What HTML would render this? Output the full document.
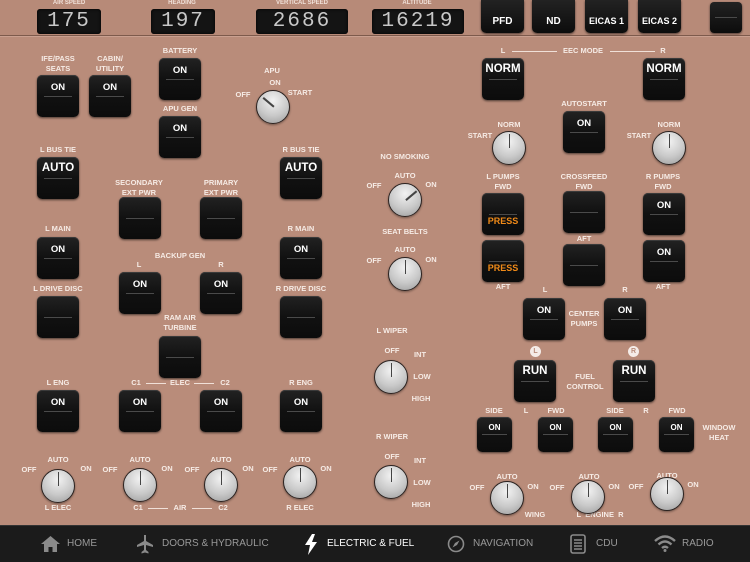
<!DOCTYPE html>
<html><head><meta charset="utf-8"><style>
*{margin:0;padding:0;box-sizing:border-box}
body{width:750px;height:562px;overflow:hidden;position:relative;background:#b98c7a;font-family:"Liberation Sans",sans-serif;color:#f4e8e2}
.top{position:absolute;left:0;top:0;width:750px;height:36px;background:#b78a78;border-bottom:1px solid #7d5a4c;box-shadow:0 1px 0 #c9a090}
.l{position:absolute;transform:translateX(-50%);white-space:nowrap;text-align:center;font-size:7.5px;line-height:10px;font-weight:bold;color:#f6ebe5}
.b{position:absolute;width:42px;height:42px;border-radius:5px;background:linear-gradient(#222 0%,#111 50%,#0c0c0c 100%);box-shadow:0 1px 2px rgba(0,0,0,.6),inset 0 1px 0 #3a3a3a;color:#fff;font-weight:bold;font-size:9.5px;text-align:center;padding-top:7px}
.b::after{content:"";position:absolute;left:7px;right:7px;top:21px;height:1px;background:#4a4a4a}
.b.s{width:35px;height:35px;font-size:8px;padding-top:6px}
.b.s::after{top:17px;left:5px;right:5px}
.big{font-size:11.5px;padding-top:5px}
.pr{color:#f08a18;padding-top:23px;font-size:9px}
.k{position:absolute;width:34px;height:34px;border-radius:50%;background:radial-gradient(circle at 50% 30%,#f2f2f2 0%,#c9c9c9 55%,#9a9a9a 100%);border:1.5px solid #2a2220;box-shadow:0 1px 2px rgba(0,0,0,.4)}
.k i{position:absolute;left:15.5px;top:2px;width:1.5px;height:14px;background:#444;transform-origin:50% 100%}
.d{position:absolute;top:9px;height:25px;background:#141414;border-radius:3px;box-shadow:inset 0 0 3px #000;color:#c8c8c8;font-family:"Liberation Mono",monospace;font-size:21px;line-height:25px;text-align:center;letter-spacing:2px}
.dl{position:absolute;top:0;transform:translateX(-50%);font-size:6px;font-weight:bold;color:#f0e0d8}
.tb{position:absolute;top:0;height:33px;width:43px;border-radius:0 0 5px 5px;background:linear-gradient(#222,#0c0c0c);color:#fff;font-weight:bold;font-size:10px;text-align:center;padding-top:16px;box-shadow:0 1px 2px rgba(0,0,0,.6)}
.ln{position:absolute;height:1px;background:#f0e0d8}
.nav{position:absolute;left:0;top:525px;width:750px;height:37px;background:#1b1b1b;border-top:1px solid #333}
.n{position:absolute;top:12px;font-size:10px;color:#999;white-space:nowrap}
.ci{position:absolute;width:11px;height:11px;border-radius:50%;background:#f5ece8;color:#b98c7a;font-size:7px;font-weight:bold;text-align:center;line-height:11px}
</style></head><body>
<div class="top"></div>
<div class="dl" style="left:69px">AIR SPEED</div><div class="d" style="left:37px;width:64px">175</div>
<div class="dl" style="left:182px">HEADING</div><div class="d" style="left:151px;width:64px">197</div>
<div class="dl" style="left:302px">VERTICAL SPEED</div><div class="d" style="left:256px;width:92px">2686</div>
<div class="dl" style="left:417px">ALTITUDE</div><div class="d" style="left:372px;width:92px">16219</div>
<div class="tb" style="left:481px">PFD</div>
<div class="tb" style="left:532px">ND</div>
<div class="tb" style="left:585px;font-size:9px">EICAS 1</div>
<div class="tb" style="left:638px;font-size:9px">EICAS 2</div>
<div class="tb" style="left:710px;width:32px;height:31px;top:2px;border-radius:4px"><div style="position:absolute;left:5px;right:5px;top:15px;height:1px;background:#4a4a4a"></div></div>

<div class="l" style="left:58px;top:54px">IFE/PASS<br>SEATS</div><div class="b" style="left:37px;top:75px">ON</div>
<div class="l" style="left:110px;top:54px">CABIN/<br>UTILITY</div><div class="b" style="left:89px;top:75px">ON</div>
<div class="l" style="left:180px;top:46px">BATTERY</div><div class="b" style="left:159px;top:58px">ON</div>
<div class="l" style="left:180px;top:104px">APU GEN</div><div class="b" style="left:159px;top:116px">ON</div>
<div class="l" style="left:272px;top:66px">APU</div><div class="l" style="left:275px;top:78px">ON</div><div class="l" style="left:243px;top:90px">OFF</div><div class="l" style="left:300px;top:88px">START</div>
<div class="k" style="left:256px;top:90px"><i style="transform:rotate(-50deg)"></i></div>
<div class="l" style="left:58px;top:145px">L BUS TIE</div><div class="b big" style="left:37px;top:157px">AUTO</div>
<div class="l" style="left:301px;top:145px">R BUS TIE</div><div class="b big" style="left:280px;top:157px">AUTO</div>
<div class="l" style="left:139px;top:178px">SECONDARY<br>EXT PWR</div><div class="b" style="left:119px;top:197px"></div>
<div class="l" style="left:221px;top:178px">PRIMARY<br>EXT PWR</div><div class="b" style="left:200px;top:197px"></div>
<div class="l" style="left:405px;top:152px">NO SMOKING</div><div class="l" style="left:405px;top:171px">AUTO</div><div class="l" style="left:374px;top:181px">OFF</div><div class="l" style="left:431px;top:180px">ON</div>
<div class="k" style="left:388px;top:183px"><i style="transform:rotate(50deg)"></i></div>
<div class="l" style="left:58px;top:224px">L MAIN</div><div class="b" style="left:37px;top:237px">ON</div>
<div class="l" style="left:301px;top:224px">R MAIN</div><div class="b" style="left:280px;top:237px">ON</div>
<div class="l" style="left:180px;top:251px">BACKUP GEN</div><div class="l" style="left:139px;top:260px">L</div><div class="l" style="left:221px;top:260px">R</div>
<div class="b" style="left:119px;top:272px">ON</div><div class="b" style="left:200px;top:272px">ON</div>
<div class="l" style="left:405px;top:227px">SEAT BELTS</div><div class="l" style="left:405px;top:245px">AUTO</div><div class="l" style="left:374px;top:256px">OFF</div><div class="l" style="left:431px;top:255px">ON</div>
<div class="k" style="left:388px;top:257px"><i></i></div>
<div class="l" style="left:58px;top:284px">L DRIVE DISC</div><div class="b" style="left:37px;top:296px"></div>
<div class="l" style="left:301px;top:284px">R DRIVE DISC</div><div class="b" style="left:280px;top:296px"></div>
<div class="l" style="left:180px;top:313px">RAM AIR<br>TURBINE</div><div class="b" style="left:159px;top:336px"></div>
<div class="l" style="left:392px;top:326px">L WIPER</div><div class="l" style="left:392px;top:346px">OFF</div><div class="l" style="left:420px;top:350px">INT</div><div class="l" style="left:422px;top:372px">LOW</div><div class="l" style="left:421px;top:394px">HIGH</div>
<div class="k" style="left:374px;top:360px"><i></i></div>
<div class="l" style="left:58px;top:378px">L ENG</div><div class="b" style="left:37px;top:390px">ON</div>
<div class="l" style="left:136px;top:378px">C1</div><div class="l" style="left:180px;top:378px">ELEC</div><div class="l" style="left:225px;top:378px">C2</div>
<div class="ln" style="left:146px;top:383px;width:20px"></div><div class="ln" style="left:194px;top:383px;width:20px"></div>
<div class="b" style="left:119px;top:390px">ON</div><div class="b" style="left:200px;top:390px">ON</div>
<div class="l" style="left:301px;top:378px">R ENG</div><div class="b" style="left:280px;top:390px">ON</div>
<div class="l" style="left:392px;top:432px">R WIPER</div><div class="l" style="left:392px;top:452px">OFF</div><div class="l" style="left:420px;top:456px">INT</div><div class="l" style="left:422px;top:478px">LOW</div><div class="l" style="left:421px;top:500px">HIGH</div>
<div class="k" style="left:374px;top:465px"><i></i></div>

<div class="l" style="left:58px;top:455px">AUTO</div><div class="l" style="left:29px;top:465px">OFF</div><div class="l" style="left:86px;top:464px">ON</div><div class="l" style="left:58px;top:503px">L ELEC</div>
<div class="k" style="left:41px;top:469px"><i></i></div>
<div class="l" style="left:140px;top:455px">AUTO</div><div class="l" style="left:110px;top:465px">OFF</div><div class="l" style="left:167px;top:464px">ON</div>
<div class="k" style="left:123px;top:468px"><i></i></div>
<div class="l" style="left:221px;top:455px">AUTO</div><div class="l" style="left:192px;top:465px">OFF</div><div class="l" style="left:248px;top:464px">ON</div>
<div class="k" style="left:204px;top:468px"><i></i></div>
<div class="l" style="left:138px;top:503px">C1</div><div class="l" style="left:180px;top:503px">AIR</div><div class="l" style="left:223px;top:503px">C2</div>
<div class="ln" style="left:148px;top:508px;width:20px"></div><div class="ln" style="left:192px;top:508px;width:20px"></div>
<div class="l" style="left:300px;top:455px">AUTO</div><div class="l" style="left:270px;top:465px">OFF</div><div class="l" style="left:326px;top:464px">ON</div><div class="l" style="left:300px;top:503px">R ELEC</div>
<div class="k" style="left:283px;top:465px"><i></i></div>

<div class="l" style="left:503px;top:46px">L</div><div class="l" style="left:583px;top:46px">EEC MODE</div><div class="l" style="left:663px;top:46px">R</div>
<div class="ln" style="left:512px;top:51px;width:45px"></div><div class="ln" style="left:610px;top:51px;width:45px"></div>
<div class="b big" style="left:482px;top:58px">NORM</div><div class="b big" style="left:643px;top:58px">NORM</div>
<div class="l" style="left:584px;top:99px">AUTOSTART</div><div class="b" style="left:563px;top:111px">ON</div>
<div class="l" style="left:509px;top:120px">NORM</div><div class="l" style="left:480px;top:131px">START</div>
<div class="k" style="left:492px;top:131px"><i></i></div>
<div class="l" style="left:669px;top:120px">NORM</div><div class="l" style="left:639px;top:131px">START</div>
<div class="k" style="left:652px;top:131px"><i></i></div>
<div class="l" style="left:503px;top:172px">L PUMPS<br>FWD</div>
<div class="b pr" style="left:482px;top:193px">PRESS</div><div class="b pr" style="left:482px;top:240px">PRESS</div>
<div class="l" style="left:503px;top:282px">AFT</div>
<div class="l" style="left:584px;top:172px">CROSSFEED<br>FWD</div><div class="b" style="left:563px;top:191px"></div>
<div class="l" style="left:584px;top:234px">AFT</div><div class="b" style="left:563px;top:244px"></div>
<div class="l" style="left:663px;top:172px">R PUMPS<br>FWD</div>
<div class="b" style="left:643px;top:193px">ON</div><div class="b" style="left:643px;top:240px">ON</div>
<div class="l" style="left:663px;top:282px">AFT</div>
<div class="l" style="left:545px;top:285px">L</div><div class="l" style="left:625px;top:285px">R</div>
<div class="b" style="left:523px;top:298px">ON</div><div class="b" style="left:604px;top:298px">ON</div>
<div class="l" style="left:584px;top:309px">CENTER<br>PUMPS</div>
<div class="ci" style="left:530px;top:346px">L</div><div class="ci" style="left:628px;top:346px">R</div>
<div class="b big" style="left:514px;top:360px">RUN</div><div class="b big" style="left:613px;top:360px">RUN</div>
<div class="l" style="left:585px;top:372px">FUEL<br>CONTROL</div>
<div class="l" style="left:494px;top:406px">SIDE</div><div class="l" style="left:526px;top:406px">L</div><div class="l" style="left:556px;top:406px">FWD</div>
<div class="l" style="left:615px;top:406px">SIDE</div><div class="l" style="left:646px;top:406px">R</div><div class="l" style="left:677px;top:406px">FWD</div>
<div class="b s" style="left:477px;top:417px">ON</div><div class="b s" style="left:538px;top:417px">ON</div>
<div class="b s" style="left:598px;top:417px">ON</div><div class="b s" style="left:659px;top:417px">ON</div>
<div class="l" style="left:719px;top:423px">WINDOW<br>HEAT</div>
<div class="l" style="left:507px;top:472px">AUTO</div><div class="l" style="left:477px;top:483px">OFF</div><div class="l" style="left:533px;top:482px">ON</div><div class="l" style="left:535px;top:510px">WING</div>
<div class="k" style="left:490px;top:481px"><i></i></div>
<div class="l" style="left:589px;top:472px">AUTO</div><div class="l" style="left:557px;top:483px">OFF</div><div class="l" style="left:614px;top:482px">ON</div><div class="l" style="left:600px;top:510px">L&nbsp;&nbsp;ENGINE&nbsp;&nbsp;R</div>
<div class="k" style="left:571px;top:480px"><i></i></div>
<div class="l" style="left:667px;top:471px">AUTO</div><div class="l" style="left:636px;top:482px">OFF</div><div class="l" style="left:693px;top:480px">ON</div>
<div class="k" style="left:650px;top:477px"><i></i></div>

<div class="nav">
<svg style="position:absolute;left:40px;top:9px" width="21" height="18" viewBox="0 0 21 18"><path d="M10.5 1 L20 9 H17 V17 H12.5 V12 H8.5 V17 H4 V9 H1 Z" fill="#8a8a8a"/></svg>
<div class="n" style="left:67px">HOME</div>
<svg style="position:absolute;left:136px;top:8px" width="18" height="20" viewBox="0 0 18 20"><path d="M8 1 h2 v6 l7 4 v2 l-7 -2 v5 l2.5 2 v1.5 L9 18.5 5.5 19.5 V18 L8 16 v-5 l-7 2 v-2 l7 -4 z" fill="#8a8a8a"/></svg>
<div class="n" style="left:162px">DOORS &amp; HYDRAULIC</div>
<svg style="position:absolute;left:304px;top:8px" width="14" height="21" viewBox="0 0 14 21"><path d="M8 0 L1 11 H6 L4 21 L13 8 H8 L11 0 Z" fill="#fff"/></svg>
<div class="n" style="left:327px;color:#fff">ELECTRIC &amp; FUEL</div>
<svg style="position:absolute;left:447px;top:9px" width="18" height="18" viewBox="0 0 18 18"><circle cx="9" cy="9" r="7.5" fill="none" stroke="#8a8a8a" stroke-width="1.6"/><path d="M12.5 5.5 L10 10 L5.5 12.5 L8 8 Z" fill="#8a8a8a"/></svg>
<div class="n" style="left:473px">NAVIGATION</div>
<svg style="position:absolute;left:570px;top:8px" width="16" height="20" viewBox="0 0 16 20"><rect x="1" y="1" width="14" height="18" rx="2" fill="none" stroke="#8a8a8a" stroke-width="1.6"/><path d="M4 6h8M4 9h8M4 12h8M4 15h8" stroke="#8a8a8a" stroke-width="1.4"/></svg>
<div class="n" style="left:596px">CDU</div>
<svg style="position:absolute;left:654px;top:9px" width="22" height="17" viewBox="0 0 22 17"><path d="M1 6 Q11 -3 21 6" fill="none" stroke="#8a8a8a" stroke-width="2.4"/><path d="M4.5 9.5 Q11 3.5 17.5 9.5" fill="none" stroke="#8a8a8a" stroke-width="2.4"/><path d="M8 13 Q11 10.5 14 13" fill="none" stroke="#8a8a8a" stroke-width="2.4"/><circle cx="11" cy="15.5" r="1.5" fill="#8a8a8a"/></svg>
<div class="n" style="left:682px">RADIO</div>
</div>
</body></html>
